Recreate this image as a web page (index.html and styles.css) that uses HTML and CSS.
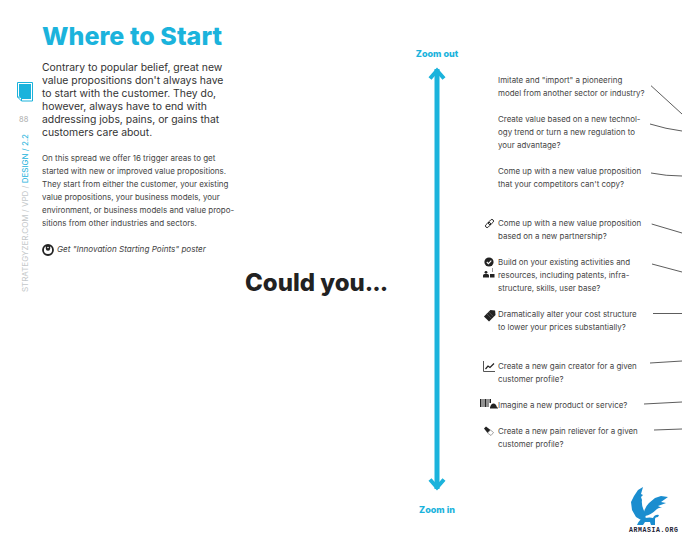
FILE: index.html
```html
<!DOCTYPE html>
<html>
<head>
	<meta charset="utf-8">
	<title>Where to Start</title>
	<link rel="stylesheet" href="styles.css">
</head>
<body>
	<div class="page">
		<aside class="rail">
			<svg class="doc" width="16" height="20" viewBox="0 0 16 20">
				<path d="M.5.5h15v18.500h-11l-4-4z" fill="#fff" stroke="#1bb3dc"/>
				<path d="M2 2h12v15h-9l-3-3z" fill="#1bb3dc"/>
				<path d="M.5 15l4 .2v3.800" fill="none" stroke="#1bb3dc"/>
			</svg>
			<span class="pagenum">88</span>
			<span class="crumbs">STRATEGYZER.COM / VPD / <b>DESIGN</b> <b>/ 2.2</b></span>
		</aside>

		<section class="intro">
			<h1>Where to Start</h1>
			<p class="lead">Contrary to popular belief, great new<br>value propositions don't always have<br>to start with the customer. They do,<br>however, always have to end with<br>addressing jobs, pains, or gains that<br>customers care about.</p>
			<p class="note">On this spread we offer 16 trigger areas to get<br>started with new or improved value propositions.<br>They start from either the customer, your existing<br>value propositions, your business models, your<br>environment, or business models and value propo-<br>sitions from other industries and sectors.</p>
			<p class="poster">
				<svg width="12" height="12" viewBox="0 0 12 12">
					<circle cx="6" cy="6" r="5" fill="none" stroke="#222" stroke-width="1.800"/>
					<path d="M3.800 1v3.500a2.200 2.200 0 0 0 4.400 0V1z" fill="#222"/>
					<circle cx="6" cy="3.500" r=".8" fill="#fff"/>
				</svg>
				<em>Get "Innovation Starting Points" poster</em>
			</p>
		</section>

		<div class="could">Could you<span class="dots">...</span></div>

		<div class="zoom">
			<span>Zoom out</span>
			<svg width="18" height="424" viewBox="0 0 18 424">
				<path d="M9 2v420" stroke="#1bb3dc" stroke-width="5" fill="none"/>
				<path d="M2 11.500l7-8 7 8M2 412.500l7 8 7-8" stroke="#1bb3dc" stroke-width="4" fill="none"/>
			</svg>
			<span>Zoom in</span>
		</div>

		<section class="questions">
			<div class="q">Imitate and "import" a pioneering<br>model from another sector or industry?</div>
			<div class="q">Create value based on a new technol-<br>ogy trend or turn a new regulation to<br>your advantage?</div>
			<div class="q gap">Come up with a new value proposition<br>that your competitors can't copy?</div>
			<div class="q">
				<svg class="ico" width="13" height="11" viewBox="0 0 14 12">
					<g transform="rotate(-45 7 6)" fill="none" stroke="#222" stroke-width="1">
						<rect x="1.500" y="4.200" width="6.500" height="3.600" rx="1.800"/>
						<rect x="6" y="4.200" width="6.500" height="3.600" rx="1.800"/>
					</g>
				</svg>
				Come up with a new value proposition<br>based on a new partnership?
			</div>
			<div class="q">
				<svg class="ico" width="13" height="22" viewBox="0 0 13 22">
					<circle cx="6" cy="5" r="4.600" fill="#222"/>
					<path d="M3.800 5l1.600 1.600 2.900-2.900" stroke="#fff" stroke-width="1.100" fill="none"/>
					<circle cx="3" cy="15.300" r="1.400" fill="#222"/>
					<path d="M0 20.500v-2q0-1.500 1.500-1.500h3q1.500 0 1.500 1.500v2zM7 17h4.500v3.500H7zM9 11.500h.9v1H9zM9 13.500h.9v1H9z" fill="#222"/>
				</svg>
				Build on your existing activities and<br>resources, including patents, infra-<br>structure, skills, user base?
			</div>
			<div class="q gap">
				<svg class="ico" width="13" height="13" viewBox="0 0 14 13">
					<path d="M8 .5l5 .5.500 5-7 7L1 7.500z" fill="#222"/>
					<path d="M6 2.500l5 5M4 4.500l5 5" stroke="#888" stroke-width=".5"/>
				</svg>
				Dramatically alter your cost structure<br>to lower your prices substantially?
			</div>
			<div class="q">
				<svg class="ico" width="12" height="11" viewBox="0 0 12 11">
					<path d="M.5 0v10.500H12" stroke="#555" fill="none"/>
					<path d="M2.500 8l2.500-3 2 1.500L11 2.500" stroke="#222" stroke-width="1.200" fill="none"/>
				</svg>
				Create a new gain creator for a given<br>customer profile?
			</div>
			<div class="q">
				<svg class="ico wide" width="18" height="10" viewBox="0 0 18 10">
					<path d="M0 0h1.500v8H0zM2.500 0h1v8h-1zM4.500 0h2v8h-2zM7.500 0h1v8h-1zM9.500 0H11v4H9.500z" fill="#222"/>
					<path d="M10 9.500v-1q1-4 3.500-4t3.500 4h1v1z" fill="#222"/>
				</svg>
				Imagine a new product or service?
			</div>
			<div class="q">
				<svg class="ico" width="12" height="10" viewBox="0 0 12 10">
					<path d="M1 2.500L3 .5l4.500 3.500-3 3z" fill="#222"/>
					<path d="M7.500 4l3 2.500-2.500 3-3.500-2.500z" fill="#fff" stroke="#666" stroke-width=".6"/>
				</svg>
				Create a new pain reliever for a given<br>customer profile?
			</div>

			<div class="logo">
				<svg width="40" height="38" viewBox="0 0 40 38">
					<path d="M14 0L9 3 5 9 2 15l1 8 4 7 5 3 5-1q-1-3 0-5Q12 20 13 13l-1-3 2-2-2-1z" fill="#1a8dcf"/>
					<path d="M39 10l-7-1-6 2-6 5q-4 4-5 9l1 4q6-1 12-7 3-2 5-1l-4-2 8-3-5-1z" fill="#1a8dcf"/>
					<path d="M8 38q2-6 8-7 5-1 8 0 2-4 6-3l-1 2q-3 0-3 2v6h-4l-1-3-5 0-2 3z" fill="#1a8dcf"/>
				</svg>
				<span>ARMASIA.ORG</span>
			</div>
		</section>

		<svg class="leaders" width="682" height="539" viewBox="0 0 682 539">
			<g fill="none" stroke="#333" stroke-width=".8">
				<path d="M651 85.700L682 114"/>
				<path d="M650 124q16 5 32 7"/>
				<path d="M651 173q15 3 31 3"/>
				<path d="M651.700 224l30.300 9"/>
				<path d="M652 264l30 8"/>
				<path d="M653 313.500h29"/>
				<path d="M650 363l32-2"/>
				<path d="M644 404l38-2"/>
				<path d="M654 430l28-1"/>
			</g>
		</svg>
	</div>
</body>
</html>
```

FILE: styles.css
```css
* {box-sizing: border-box; font-family: "Inter", sans-serif;}
body {margin: 0; background: #fff;}

.page {display: flex; width: 682px; height: 539px; overflow: hidden; position: relative; color: #333;}

.rail {width: 42px; padding: 82px 0 0 7px; display: flex; flex-direction: column; align-items: flex-start;}
.doc {margin-left: 10px;}
.pagenum {margin: 13px 0 0 12px; font-size: 7.500px; line-height: 10px; color: #aaa;}
.crumbs {margin: 9px 0 0 13px; writing-mode: vertical-rl; transform: rotate(180deg); font-size: 8px; line-height: 10px; color: #c4c8ca; white-space: nowrap;}
.crumbs b {font-weight: 400; color: #1bb3dc;}

.intro {width: 203px; padding-top: 21px;}
h1 {margin: 0; font-size: 25px; line-height: 30px; font-weight: 800; color: #1bb3dc; letter-spacing: .05px;}
p {margin: 0;}
.lead {margin-top: 10px; font-size: 10.400px; line-height: 13px; white-space: nowrap;}
.note {margin-top: 13px; font-size: 8px; line-height: 13px; white-space: nowrap; color: #444;}
.poster {margin-top: 13px; display: flex; align-items: center; gap: 3px; font-size: 8.150px; line-height: 13px; white-space: nowrap; color: #444;}

.could {width: 170px; padding-top: 267px; font-size: 24px; line-height: 32px; font-weight: 800; color: #222; white-space: nowrap;}
.dots {letter-spacing: -1px;}

.zoom {width: 44px; display: flex; flex-direction: column; align-items: center; padding-top: 48px; font-size: 9px; line-height: 11px; font-weight: 800; color: #1bb3dc; white-space: nowrap;}
.zoom svg {margin: 8px 0 13px;}

.questions {width: 184px; margin-left: 39px; padding-top: 74px; display: flex; flex-direction: column; font-size: 7.950px; line-height: 13px; color: #444; white-space: nowrap;}
.q {position: relative; margin-bottom: 13px;}
.q.gap {margin-bottom: 26px;}
.ico {position: absolute; left: -15px; top: 1px;}
.ico.wide {left: -18px; top: 0;}

.logo {position: absolute; right: 1px; top: 487px; display: flex; flex-direction: column; align-items: flex-start; width: 52px;}
.logo span {margin-top: 1px; font-family: "Liberation Mono", monospace; font-size: 6.500px; line-height: 9px; font-weight: 700; color: #223; letter-spacing: .6px;}

.leaders {position: absolute; left: 0; top: 0;}
```
